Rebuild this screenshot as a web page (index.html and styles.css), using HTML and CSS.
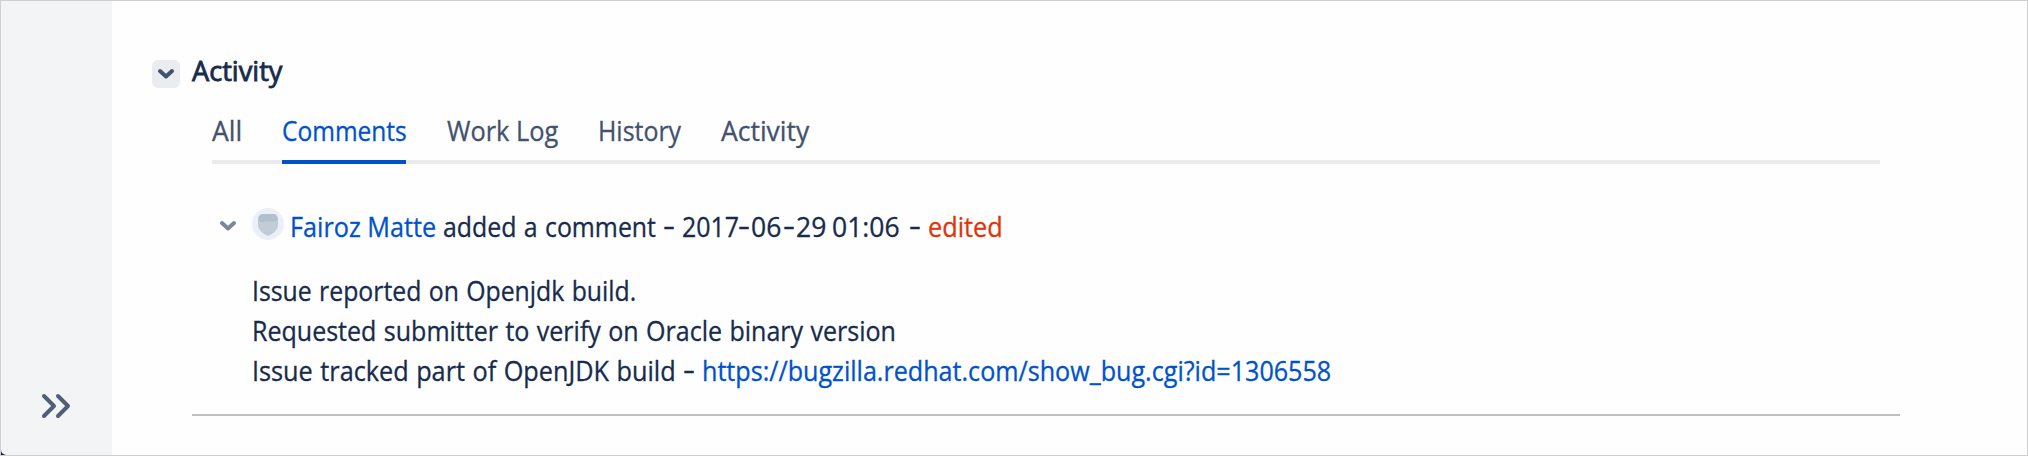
FILE: index.html
```
<!DOCTYPE html>
<html lang="en">
<head>
<meta charset="utf-8">
<title>Activity</title>
<link rel="stylesheet" href="styles.css">
</head>
<body>
<div class="page">
  <aside class="sidebar">
    <svg class="expand" width="32" height="28" viewBox="0 0 32 28"><path d="M4 4l10 10L4 24M18 4l10 10L18 24"/></svg>
    <svg class="corner" width="5" height="5" viewBox="0 0 5 5"><path d="M0 0Q0 4 5 5H0Z"/></svg>
  </aside>
  <main class="main">
    <header class="section-head">
      <span class="toggle"><svg width="20" height="12" viewBox="0 0 20 12"><path d="M4 3l6 5.5L16 3"/></svg></span>
      <h2 class="title"><span class="t">Activity</span></h2>
    </header>
    <nav class="tabs">
      <a class="tab tab-all"><span class="t">All</span></a>
      <a class="tab tab-comments active"><span class="t">Comments</span></a>
      <a class="tab tab-work"><span class="t">Work Log</span></a>
      <a class="tab tab-history"><span class="t">History</span></a>
      <a class="tab tab-activity"><span class="t">Activity</span></a>
    </nav>
    <article class="comment">
      <div class="comment-head">
        <svg class="chevron" width="20" height="12" viewBox="0 0 20 12"><path d="M4 3l6 5.5L16 3"/></svg>
        <svg class="avatar" width="32" height="32" viewBox="0 0 32 32"><circle cx="16" cy="16" r="16" fill="#ebf0f8"/><path d="M6 12Q6 6 11 6H22Q26 7 26 12V18Q25 24 16 28Q7 24 6 18Z" fill="#c1ccd7"/><path d="M6.5 14V10Q7 6 12 6H22Q26 7 25.5 12L24 13Z" fill="#b3bfca"/></svg>
        <a class="author"><span class="t">Fairoz Matte</span></a>
        <span class="action"><span class="t">added a comment</span></span>
        <span class="dash">-</span>
        <span class="date"><span class="year">2017</span><span class="hyphen">-</span><span class="month">06</span><span class="hyphen">-</span><span class="day">29</span></span>
        <span class="time">01:06</span>
        <span class="dash">-</span>
        <span class="edited"><span class="t">edited</span></span>
      </div>
      <div class="comment-body">
        <p class="line line-1"><span class="t">Issue reported on Openjdk build.</span></p>
        <p class="line line-2"><span class="t">Requested submitter to verify on Oracle binary version</span></p>
        <p class="line line-3"><span class="lead"><span class="t">Issue tracked part of OpenJDK build</span></span><span class="dash">-</span><a class="link"><span class="t">https://bugzilla.redhat.com/show_bug.cgi?id=1306558</span></a></p>
      </div>
    </article>
  </main>
</div>
</body>
</html>
```
FILE: styles.css
```
* { box-sizing: border-box; }
body { margin: 0; background: #fefefe; }
h2, p { margin: 0; font: inherit; }
svg { display: block; flex: none; }
path { stroke-linecap: round; stroke-linejoin: round; }
.page { display: flex; width: 2028px; height: 456px; border: 1px solid #cfcfd0; font: 400 26.5px/40px "Open Sans", "Noto Sans", sans-serif; color: #172b4d; white-space: nowrap; -webkit-text-stroke: .3px currentColor; }
.sidebar { position: relative; flex: none; width: 111px; padding: 391px 0 0 39px; background: #f3f4f6; }
.expand path { fill: none; stroke: #505f79; stroke-width: 4; }
.corner { position: absolute; left: 0; bottom: 0; }
.corner path { fill: #1d1d3d; }
.main { flex: 1; min-width: 0; padding: 50px 127px 0 80px; }
.section-head, .tabs, .comment-head, .line { display: flex; }
.section-head { height: 40px; margin-left: -40px; }
.toggle { display: flex; align-items: center; justify-content: center; width: 28px; height: 28px; margin: 9px 12px 0 0; border-radius: 6px; background: #ebecf0; }
.toggle path { fill: none; stroke: #42526e; stroke-width: 4; }
.title { -webkit-text-stroke-width: .8px; }

/* Condenses the text slightly; each run sets its own ratio. */
.t { display: inline-block; transform: scaleX(var(--fit, 1)); transform-origin: 0 50%; }
.title { --fit: 1.025; }
.tab-comments { --fit: .925; }
.tab-work { --fit: .957; }
.tab-history { --fit: .94; }
.author { --fit: .952; }
.action { --fit: .938; word-spacing: 1px; }
.edited { --fit: .955; }
.line-1 { --fit: .936; word-spacing: 1px; }
.line-2 { --fit: .944; word-spacing: 1px; }
.lead { --fit: .953; word-spacing: 1px; }
.link { --fit: .948; }

.tabs { height: 53px; margin: 20px 20px 0; border-bottom: 4px solid #ebebed; color: #42526e; }
.tab { flex: none; height: 53px; }
.tab-all { width: 70px; }
.tab-comments { width: 124px; margin-right: 41px; }
.tab-work { width: 151px; }
.tab-history { width: 123px; }
.active { color: #0052cc; border-bottom: 4px solid #0052cc; }
.comment { height: 252px; padding: 43px 0 0 26px; border-bottom: 2px solid #c1c1c1; }
.comment-head { height: 40px; }
.comment-head > * { flex: none; }
.chevron { margin: 13px 13px 0 0; }
.chevron path { fill: none; stroke: #7a869a; stroke-width: 4; }
.avatar { margin: 1px 6px 0 1px; }
.author, .link { color: #0052cc; }
.author { width: 153px; }
.action { width: 220px; }
.dash { width: 19px; transform: translateY(-2px) scaleX(1.4); transform-origin: 0 50%; }
.date { display: flex; width: 150px; }
.year { width: 56px; transform: scaleX(.94); transform-origin: 0 50%; }
.month { width: 32px; }
.hyphen { width: 13px; transform: translateY(-2px) scaleX(1.4); transform-origin: 0 50%; }
.time { width: 77px; }
.edited { color: #de350b; }
.comment-body { padding: 24px 0 0 34px; }
.lead { width: 431px; }
```
